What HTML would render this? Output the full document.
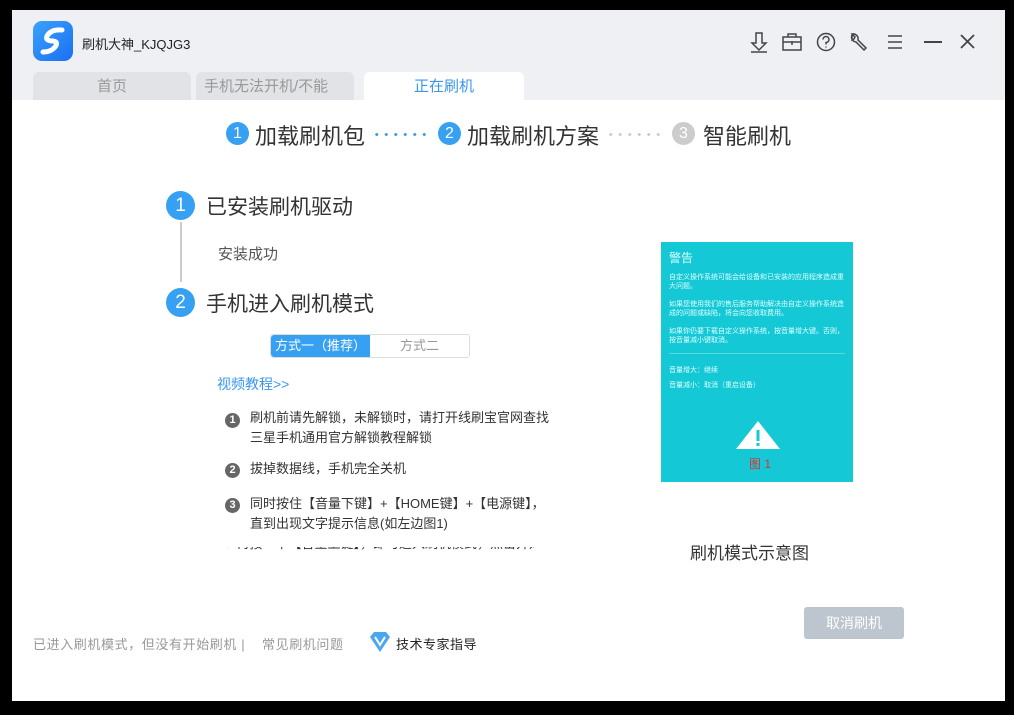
<!DOCTYPE html>
<html><head><meta charset="utf-8"><style>
*{margin:0;padding:0;box-sizing:border-box}
body{width:1014px;height:715px;background:#000;position:relative;overflow:hidden;font-family:"Liberation Sans","Noto Sans CJK SC",sans-serif}
.a{position:absolute;white-space:nowrap}
.win{position:absolute;left:12px;top:10px;width:993px;height:691px;background:#fff}
.hdr{position:absolute;left:12px;top:10px;width:993px;height:90px;background:#eef0f4}
.tab{position:absolute;top:72px;height:28px;border-radius:6px 6px 0 0;font-size:15px;line-height:30px;text-align:center;overflow:hidden}
.c{position:absolute;border-radius:50%;color:#fff;text-align:center}
.n{width:15px;height:15px;border-radius:50%;background:#666;color:#fff;font-size:11px;line-height:15px;text-align:center;font-weight:bold}
.li{font-size:13px;color:#333;line-height:20px}
.dots{position:absolute;top:133px;width:56px;height:3px;background-image:radial-gradient(circle,currentColor 1.5px,transparent 1.6px);background-size:9.5px 3px}
</style></head><body>
<div class="win"></div>
<div class="hdr"></div>
<div class="a" style="left:33px;top:21px;width:40px;height:40px;border-radius:9px;background:linear-gradient(135deg,#3aa2ff,#1a6ff0)">
<svg width="40" height="40" viewBox="0 0 40 40"><path d="M29 9 Q18 8 14 15 Q12 20 20 20 Q26 21 22 26 Q18 31 10 31" stroke="#fff" stroke-width="5" fill="none" stroke-linecap="round"/></svg></div>
<div class="a" style="left:82px;top:34px;font-size:13px;color:#222">刷机大神_KJQJG3</div>
<svg class="a" style="left:748px;top:30px" width="240" height="24" viewBox="0 0 240 24" fill="none" stroke="#444" stroke-width="1.5">
<path d="M8 3v10h-4l7 7 7-7h-4V3z"/><path d="M3 22h16"/>
<rect x="35" y="7" width="18" height="13"/><path d="M40 7V4h8v3M35 12h18M44 11v4"/>
<circle cx="78" cy="12" r="8.5"/><path d="M75 9.5a3 3 0 1 1 3 3v2M78 16.5v1"/>
<path d="M104 5a5 5 0 0 0 4 7l8 8 2-2-8-8a5 5 0 0 0-6-6l3 3-1 2-2 1z"/>
<path d="M140 6h14M140 12h14M140 18h14"/>
<path d="M176 12h18" stroke-width="2"/>
<path d="M213 5l13 13M226 5l-13 13" stroke-width="1.8"/>
</svg>
<div class="tab" style="left:33px;width:158px;background:#e1e3e6;color:#999">首页</div>
<div class="tab" style="left:196px;width:158px;background:#e1e3e6;color:#999;text-align:left;padding-left:8px"><div style="width:125px;overflow:hidden;white-space:nowrap">手机无法开机/不能</div></div>
<div class="tab" style="left:364px;width:160px;background:#fff;color:#3a97ee">正在刷机</div>

<div class="c" style="left:226px;top:122px;width:23px;height:23px;background:#36a0f2;font-size:16px;line-height:23px">1</div>
<div class="a" style="left:255px;top:119px;font-size:22px;color:#333">加载刷机包</div>
<div class="dots" style="left:372px;color:#36a0f2"></div>
<div class="c" style="left:438px;top:122px;width:23px;height:23px;background:#36a0f2;font-size:16px;line-height:23px">2</div>
<div class="a" style="left:467px;top:119px;font-size:22px;color:#333">加载刷机方案</div>
<div class="dots" style="left:606px;color:#ccc"></div>
<div class="c" style="left:672px;top:122px;width:23px;height:23px;background:#ccc;font-size:16px;line-height:23px">3</div>
<div class="a" style="left:703px;top:119px;font-size:22px;color:#333">智能刷机</div>

<div class="c" style="left:166px;top:191px;width:29px;height:29px;background:#36a0f2;font-size:19px;line-height:29px">1</div>
<div class="a" style="left:206px;top:191px;font-size:21px;color:#333">已安装刷机驱动</div>
<div class="a" style="left:180px;top:222px;width:2px;height:60px;background:#ccc"></div>
<div class="a" style="left:218px;top:243px;font-size:15px;color:#555">安装成功</div>
<div class="c" style="left:166px;top:288px;width:29px;height:29px;background:#36a0f2;font-size:19px;line-height:29px">2</div>
<div class="a" style="left:206px;top:288px;font-size:21px;color:#333">手机进入刷机模式</div>

<div class="a" style="left:270px;top:334px;width:200px;height:24px;border:1px solid #ddd;border-radius:3px"></div>
<div class="a" style="left:271px;top:335px;width:99px;height:22px;background:#36a0f2;color:#fff;font-size:13px;line-height:22px;text-align:center;border-radius:3px 0 0 3px">方式一（推荐）</div>
<div class="a" style="left:370px;top:335px;width:99px;height:22px;color:#999;font-size:13px;line-height:22px;text-align:center">方式二</div>
<div class="a" style="left:217px;top:374px;font-size:14px;color:#3a97ee">视频教程&gt;&gt;</div>

<div class="a n" style="left:225px;top:413px">1</div>
<div class="a li" style="left:250px;top:408px">刷机前请先解锁，未解锁时，请打开线刷宝官网查找<br>三星手机通用官方解锁教程解锁</div>
<div class="a n" style="left:225px;top:463px">2</div>
<div class="a li" style="left:250px;top:459px">拔掉数据线，手机完全关机</div>
<div class="a n" style="left:225px;top:498px">3</div>
<div class="a li" style="left:250px;top:494px">同时按住【音量下键】+【HOME键】+【电源键】，<br>直到出现文字提示信息(如左边图1)</div>
<div class="a" style="left:225px;top:547px;width:310px;height:4px;overflow:hidden"><div style="font-size:13px;color:#333;margin-top:-14px">● 再按一下【音量上键】，即可进入刷机模式，点击开始</div></div>

<div class="a" style="left:661px;top:242px;width:192px;height:240px;background:#14c8d6;color:#dff;font-size:7px;line-height:9px;padding:12px 8px;white-space:normal;overflow:hidden">
<div style="font-size:12px;margin-bottom:10px">警告</div>
<div>自定义操作系统可能会给设备和已安装的应用程序造成重大问题。</div><br>
<div>如果您使用我们的售后服务帮助解决由自定义操作系统造成的问题或缺陷，将会向您收取费用。</div><br>
<div>如果你仍要下载自定义操作系统，按音量增大键。否则，按音量减小键取消。</div>
<div style="border-top:1px solid #5dd;margin:8px 0 12px"></div>
<div>音量增大：继续</div><div style="margin-top:6px">音量减小：取消（重启设备）</div>
</div>
<svg class="a" style="left:734px;top:419px" width="48" height="32"><path d="M24 2 L46 30 L2 30Z" fill="#fff"/><rect x="22.5" y="11" width="3" height="11" fill="#14c8d6"/><rect x="22.5" y="24" width="3" height="3" fill="#14c8d6"/></svg>
<div class="a" style="left:749px;top:455px;font-size:12px;color:#d33">图 1</div>
<div class="a" style="left:690px;top:539px;font-size:17px;color:#333">刷机模式示意图</div>

<div class="a" style="left:804px;top:607px;width:100px;height:32px;background:#bdc6ce;border-radius:3px;color:#fff;font-size:14px;line-height:32px;text-align:center">取消刷机</div>
<div class="a" style="left:33px;top:634px;font-size:13px;color:#999;letter-spacing:0.6px">已进入刷机模式，但没有开始刷机 |&nbsp;&nbsp;&nbsp; 常见刷机问题</div>
<svg class="a" style="left:368px;top:631px" width="24" height="22"><path d="M2 6 L6 1 H18 L22 6 L12 21Z" fill="#4aa6ee"/><path d="M7 6 L12 14 L17 6" stroke="#fff" stroke-width="2" fill="none"/></svg>
<div class="a" style="left:396px;top:634px;font-size:13px;color:#222;letter-spacing:0.5px">技术专家指导</div>
</body></html>
